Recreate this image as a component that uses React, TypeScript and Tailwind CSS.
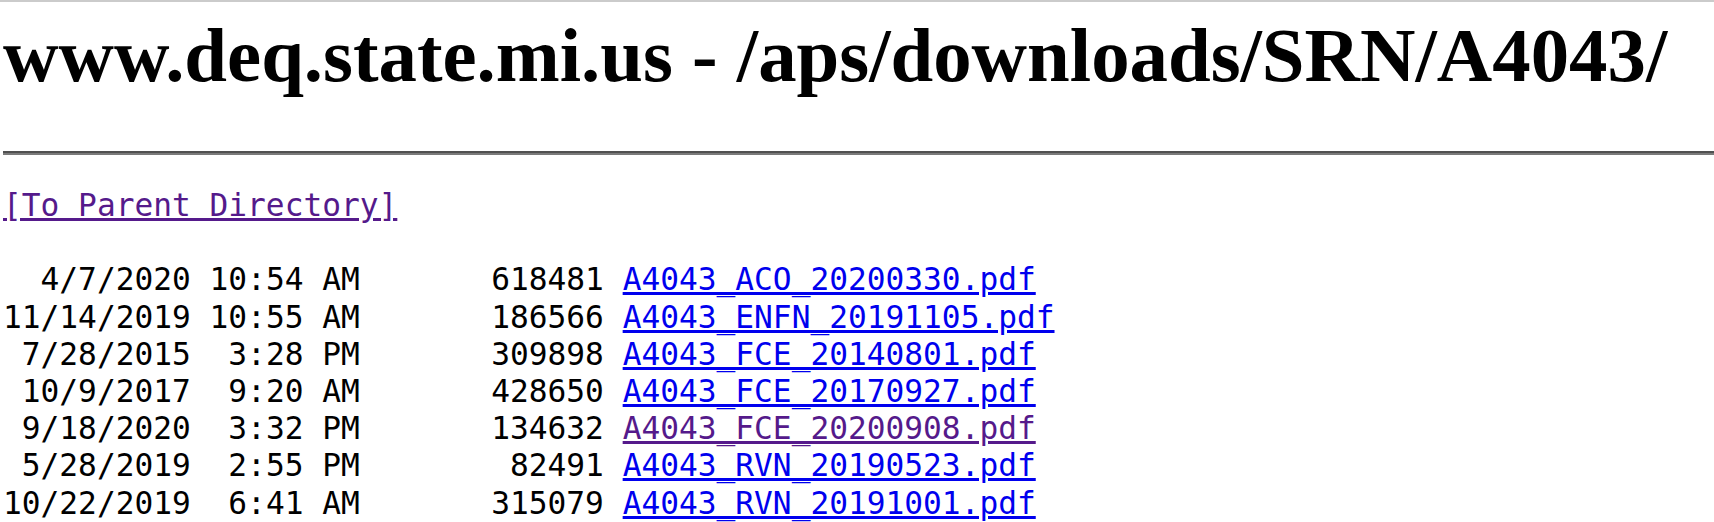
const files = [
  { date: "4/7/2020", time: "10:54 AM", size: "618481", name: "A4043_ACO_20200330.pdf", visited: false },
  { date: "11/14/2019", time: "10:55 AM", size: "186566", name: "A4043_ENFN_20191105.pdf", visited: false },
  { date: "7/28/2015", time: "3:28 PM", size: "309898", name: "A4043_FCE_20140801.pdf", visited: false },
  { date: "10/9/2017", time: "9:20 AM", size: "428650", name: "A4043_FCE_20170927.pdf", visited: false },
  { date: "9/18/2020", time: "3:32 PM", size: "134632", name: "A4043_FCE_20200908.pdf", visited: true },
  { date: "5/28/2019", time: "2:55 PM", size: "82491", name: "A4043_RVN_20190523.pdf", visited: false },
  { date: "10/22/2019", time: "6:41 AM", size: "315079", name: "A4043_RVN_20191001.pdf", visited: false },
];

export default function App() {
  return (
    <div className="w-[1714px] h-[522px] overflow-hidden bg-white text-black">
      <div className="h-[2px] bg-[#cbcbcb]" />
      {/* Page title */}
      <h1 className="mt-[11px] pl-[3px] font-['Liberation_Serif',serif] text-[76.8px] font-bold leading-[85px] whitespace-nowrap">
        www.deq.state.mi.us - /aps/downloads/SRN/A4043/
      </h1>
      <div className="mt-[53px] ml-[3px] border-t-[2px] border-b-[2px] border-t-[#505050] border-b-[#7a7a7a]" />
      {/* Directory listing */}
      <pre className="mt-[32px] pl-[3px] font-['DejaVu_Sans_Mono',monospace] text-[31.2px] leading-[37.2px]">
        <a href="#" className="text-[#551a8b] underline">
          [To Parent Directory]
        </a>
        {"\n\n"}
        {files.map((f) => (
          <span key={f.name}>
            {f.date.padStart(10, " ")} {f.time.padStart(8, " ")} {f.size.padStart(12, " ")}{" "}
            <a
              href="#"
              className={f.visited ? "text-[#551a8b] underline" : "text-[#0000ee] underline"}
            >
              {f.name}
            </a>
            {"\n"}
          </span>
        ))}
      </pre>
    </div>
  );
}
